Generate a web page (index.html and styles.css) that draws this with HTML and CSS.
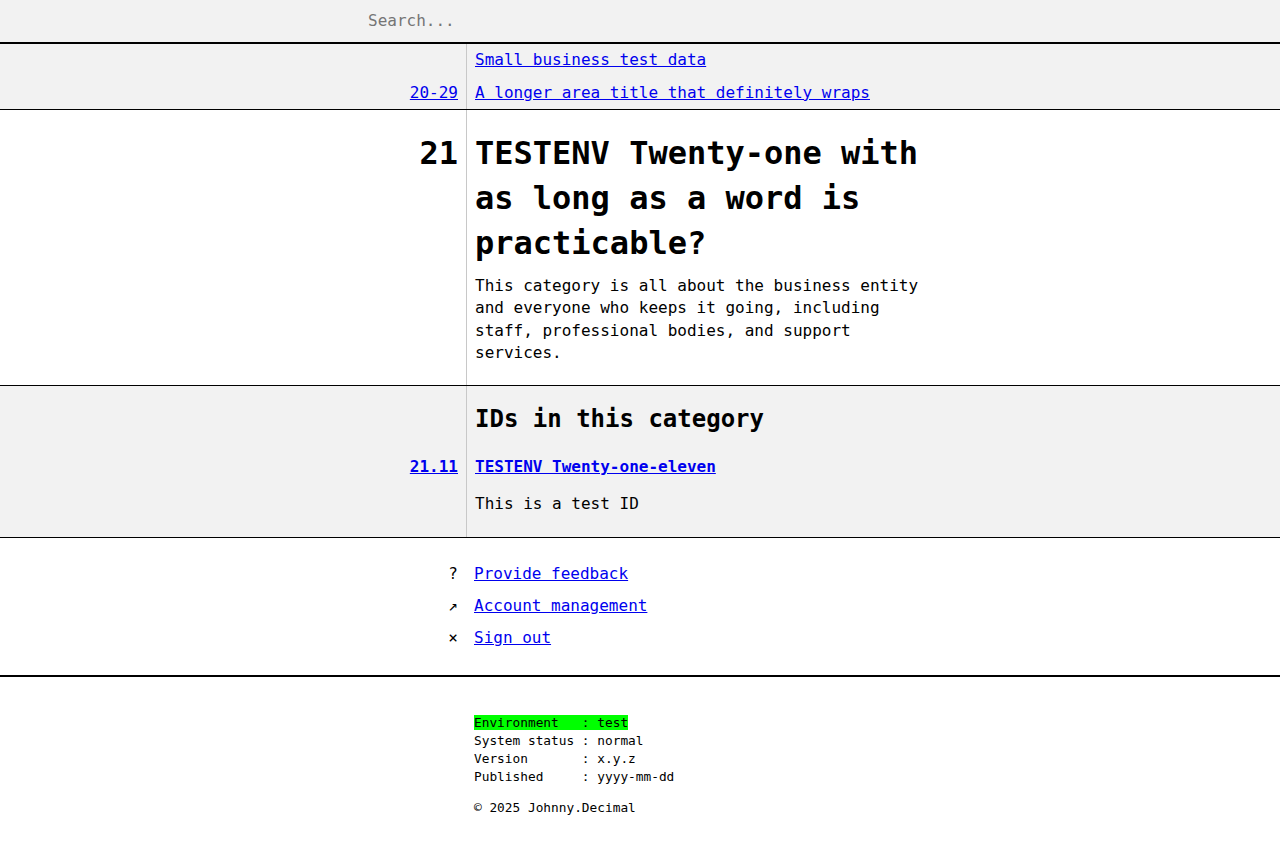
FILE: index.html
```html
<!DOCTYPE html>
<html lang="en">
<head>
<meta charset="utf-8">
<title>TESTENV Twenty-one</title>
<link rel="stylesheet" href="styles.css">
</head>
<body>
<header class="search-bar">
  <input class="search-input" type="text" placeholder="Search...">
</header>
<main>
  <section class="row row-grey area">
    <div class="num"></div>
    <div class="content"><a href="#">Small business test data</a></div>
    <div class="num"><a href="#">20-29</a></div>
    <div class="content"><a href="#">A longer area title that definitely wraps</a></div>
  </section>
  <section class="row category">
    <div class="num big">21</div>
    <div class="content">
      <h1 class="title">TESTENV Twenty-one with as long as a word is practicable?</h1>
      <p class="desc">This category is all about the business entity and everyone who keeps it going, including staff, professional bodies, and support services.</p>
    </div>
  </section>
  <section class="row row-grey ids">
    <div class="num"></div>
    <div class="content"><h2 class="sub">IDs in this category</h2></div>
    <div class="num"><a class="bold" href="#">21.11</a></div>
    <div class="content"><a class="bold" href="#">TESTENV Twenty-one-eleven</a></div>
    <div class="num"></div>
    <div class="content"><p class="id-desc">This is a test ID</p></div>
  </section>
  <nav class="menu">
    <span class="icon">?</span><a href="#">Provide feedback</a>
    <span class="icon">↗</span><a href="#">Account management</a>
    <span class="icon">×</span><a href="#">Sign out</a>
  </nav>
</main>
<footer class="footer">
  <pre class="env"><span class="hl">Environment   : test</span>
System status : normal
Version       : x.y.z
Published     : yyyy-mm-dd</pre>
  <p class="copy">© 2025 Johnny.Decimal</p>
</footer>
</body>
</html>
```
FILE: styles.css
```css
* { box-sizing: border-box; }
html, body {
  margin: 0;
  padding: 0;
  background: #fff;
  color: #000;
  font-family: "DejaVu Sans Mono", "Liberation Mono", monospace;
  font-size: 16px;
  line-height: 1.4;
}
a { color: #0000ee; text-decoration: underline; }
a.bold { font-weight: bold; }

.search-bar {
  height: 44px;
  background: #f2f2f2;
  border-bottom: 2px solid #000;
  display: flex;
  align-items: center;
  padding-left: 360px;
  padding-bottom: 2px;
}
.search-input {
  font-family: inherit;
  font-size: 16px;
  border: none;
  background: transparent;
  outline: none;
  padding: 0 8px;
  width: 600px;
  height: 40px;
  color: #000;
}
.search-input::placeholder { color: #757575; }

.row {
  display: grid;
  grid-template-columns: 467px 1fr;
  border-bottom: 1px solid #000;
}
.row-grey { background: #f2f2f2; }
.num {
  border-right: 1px solid #c8c8c8;
  text-align: right;
  padding-right: 8px;
}
.content {
  padding-left: 8px;
  max-width: 464px;
}

.area .num, .area .content { line-height: 24px; }
.area .num:nth-child(1), .area .content:nth-child(2) { padding-top: 4px; padding-bottom: 5px; }
.area .num:nth-child(3), .area .content:nth-child(4) { padding-top: 4px; padding-bottom: 4px; }

.category .num, .category .content { padding-top: 21px; padding-bottom: 20px; }
.big { font-size: 32px; font-weight: bold; line-height: 45px; }
.title {
  margin: 0;
  font-size: 32px;
  font-weight: bold;
  line-height: 45px;
}
.desc {
  margin: 9px 0 0 0;
  line-height: 22.4px;
}

.ids .num:nth-child(1), .ids .content:nth-child(2) { padding-top: 17px; padding-bottom: 20px; }
.ids .num:nth-child(5), .ids .content:nth-child(6) { padding-top: 14px; padding-bottom: 22px; }
.sub {
  margin: 0;
  font-size: 24px;
  font-weight: bold;
  line-height: 33.6px;
}
.id-desc { margin: 0; }

.menu {
  display: grid;
  grid-template-columns: 466px auto;
  justify-content: start;
  row-gap: 9.6px;
  padding: 25px 0 26px 0;
  border-bottom: 2px solid #000;
  line-height: 22.4px;
}
.menu .icon {
  text-align: right;
  padding-right: 8px;
}
.menu a { padding-left: 8px; }

.footer {
  padding: 37px 0 30px 474px;
  font-size: 12.8px;
}
.env {
  margin: 0;
  font-family: inherit;
  font-size: 12.8px;
  line-height: 18px;
}
.hl { background: #00ff00; }
.copy {
  margin: 13px 0 0 0;
  line-height: 18px;
}
```
